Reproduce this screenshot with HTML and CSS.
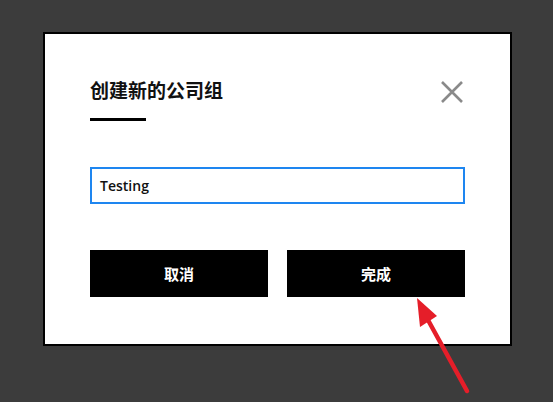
FILE: index.html
```html
<!DOCTYPE html>
<html lang="zh">
<head>
<meta charset="utf-8">
<link rel="stylesheet" href="styles.css">
</head>
<body>
<div class="dialog">
  <div class="head">
    <h1 class="title">创建新的公司组</h1>
    <svg class="close" width="24" height="24" viewBox="0 0 24 24"><path d="M2 2 L22 22 M22 2 L2 22" stroke="#8a8a8a" stroke-width="2.6" fill="none"/></svg>
  </div>
  <div class="bar"></div>
  <div class="field">Testing</div>
  <div class="actions">
    <button class="btn">取消</button>
    <button class="btn">完成</button>
  </div>
</div>
<svg class="arrow" width="553" height="402" viewBox="0 0 553 402">
  <line x1="428" y1="320" x2="467" y2="391" stroke="#e51e29" stroke-width="4.5" stroke-linecap="round"/>
  <polygon points="417,298 420,327 437,316" fill="#e51e29"/>
</svg>
</body>
</html>
```
FILE: styles.css
```css
html, body {
  margin: 0;
  padding: 0;
  background: #3c3c3c;
  width: 553px;
  height: 402px;
  overflow: hidden;
  font-family: "Noto Sans CJK SC", "Open Sans", sans-serif;
}
body {
  padding: 32px 0 0 43px;
  box-sizing: border-box;
}
.dialog {
  box-sizing: border-box;
  width: 469px;
  height: 314px;
  background: #fff;
  border: 2px solid #000;
  padding: 43px 45px 0 45px;
}
.head {
  display: flex;
  justify-content: space-between;
  align-items: flex-start;
}
.title {
  margin: 0;
  font-size: 19px;
  line-height: 26px;
  font-weight: 700;
  color: #111;
}
.close {
  margin-top: 3px;
  margin-right: 1px;
}
.bar {
  width: 56px;
  height: 3px;
  background: #000;
  margin-top: 14px;
}
.field {
  box-sizing: border-box;
  margin-top: 46px;
  height: 37px;
  border: 2px solid #1e86f0;
  padding-left: 8px;
  font-family: "Open Sans", sans-serif;
  font-weight: 600;
  font-size: 14px;
  line-height: 33px;
  color: #111;
}
.actions {
  display: flex;
  gap: 19px;
  margin-top: 46px;
}
.btn {
  width: 178px;
  height: 47px;
  background: #000;
  color: #fff;
  border: 0;
  padding: 0;
  font-family: "Noto Sans CJK SC", sans-serif;
  font-weight: 700;
  font-size: 15px;
}
.arrow {
  position: absolute;
  left: 0;
  top: 0;
  pointer-events: none;
}
```
